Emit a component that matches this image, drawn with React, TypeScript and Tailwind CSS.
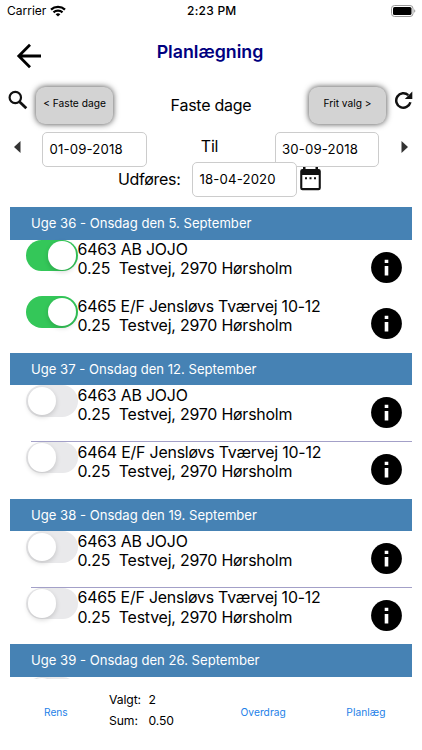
import { useState } from "react";

interface Task {
  id: string;
  name: string;
  hours: string;
  address: string;
}

interface Week {
  title: string;
  tasks: Task[];
}

const ADDRESS = "Testvej, 2970 Hørsholm";

const weeks: Week[] = [
  {
    title: "Uge 36 - Onsdag den 5. September",
    tasks: [
      { id: "36-1", name: "6463 AB JOJO", hours: "0.25", address: ADDRESS },
      { id: "36-2", name: "6465 E/F Jensløvs Tværvej 10-12", hours: "0.25", address: ADDRESS },
    ],
  },
  {
    title: "Uge 37 - Onsdag den 12. September",
    tasks: [
      { id: "37-1", name: "6463 AB JOJO", hours: "0.25", address: ADDRESS },
      { id: "37-2", name: "6464 E/F Jensløvs Tværvej 10-12", hours: "0.25", address: ADDRESS },
    ],
  },
  {
    title: "Uge 38 - Onsdag den 19. September",
    tasks: [
      { id: "38-1", name: "6463 AB JOJO", hours: "0.25", address: ADDRESS },
      { id: "38-2", name: "6465 E/F Jensløvs Tværvej 10-12", hours: "0.25", address: ADDRESS },
    ],
  },
];

function StatusBar() {
  return (
    <div className="flex h-[22px] items-center pl-[7px] pr-[6px] text-[12px] leading-none">
      <div className="flex w-[180px] items-center gap-[4px]">
        <span>Carrier</span>
        <svg className="h-[12px] w-[16px]" viewBox="0 0 16 12">
          <path d="M1 4.6a10.2 10.2 0 0 1 14 0" fill="none" stroke="#000" strokeWidth="2.3" />
          <path d="M3.5 7.4a6.6 6.6 0 0 1 9 0" fill="none" stroke="#000" strokeWidth="2.2" />
          <path d="M5.6 9.2a3.7 3.7 0 0 1 4.8 0L8 11.6z" />
        </svg>
      </div>
      <span className="font-medium tracking-[0.25px]">2:23 PM</span>
      <svg className="ml-auto h-[12px] w-[25px]" viewBox="0 0 25 12">
        <rect x="0.5" y="0.5" width="21.5" height="11" rx="3" fill="#fff" stroke="#999" />
        <rect x="2" y="2" width="18.5" height="8" rx="1.6" />
        <path d="M23.2 4.2c1.5.6 1.5 3 0 3.6z" fill="#999" />
      </svg>
    </div>
  );
}

function DateField({ value }: { value: string }) {
  return (
    <div className="flex h-[34.5px] w-[104.5px] items-center rounded-[5px] border border-[#ccc] bg-white pl-[6.5px] pt-[1.5px] text-[13.2px] tracking-[0.15px]">
      {value}
    </div>
  );
}

function Toggle({ on, onClick }: { on: boolean; onClick?: () => void }) {
  return (
    <button
      role="switch"
      aria-checked={on}
      onClick={onClick}
      className={`flex h-[31.5px] w-[51.5px] shrink-0 items-center rounded-full px-[1.5px] ${
        on ? "justify-end bg-[#34c759]" : "justify-start bg-[#e9e9eb]"
      }`}
    >
      <span className="size-[28.5px] rounded-full bg-white shadow-[0_2px_5px_rgba(0,0,0,0.16)]" />
    </button>
  );
}

function InfoIcon() {
  return (
    <svg className="size-[31px]" viewBox="0 0 31 31">
      <circle cx="15.5" cy="15.5" r="15.4" />
      <path d="M13.7 7.8h3.6v3.2h-3.6zM13.7 14h3.6v9.5h-3.6z" fill="#fff" />
    </svg>
  );
}

export default function App() {
  const [selected, setSelected] = useState<string[]>(["36-1", "36-2"]);

  const toggle = (id: string) => {
    setSelected((prev) => (prev.includes(id) ? prev.filter((x) => x !== id) : [...prev, id]));
  };

  return (
    <div className="flex h-[750px] w-[422px] flex-col overflow-hidden bg-white font-['Inter',sans-serif] text-black">
      <StatusBar />

      {/* Title */}
      <header className="flex h-[60px] items-center pl-[16px] pr-[46px]">
        <svg className="mt-[8px] h-[26px] w-[26px]" viewBox="0 0 26 26" fill="none" stroke="#000" strokeWidth="2.8">
          <path d="M25 13H3M14 1.8L2.8 13 14 24.2" />
        </svg>
        <h1 className="flex-1 pl-[2px] text-center text-[17.8px] font-semibold text-[#000080]">Planlægning</h1>
      </header>

      {/* Mode */}
      <div className="flex h-[48px] items-start pl-[8px] pr-[9px] pt-[4px]">
        <svg className="mt-[4px] size-[20px]" viewBox="0 0 20 20" fill="none" stroke="#111">
          <circle cx="7.3" cy="7.5" r="5.7" strokeWidth="2.2" />
          <path d="M11.5 11.7l6.8 6.6" strokeWidth="2.8" />
        </svg>
        <button className="ml-[8px] mt-[1px] h-[37px] w-[77px] rounded-[9px] bg-[#d3d3d3] pb-[4px] text-[10.2px] shadow-[0_0_6px_rgba(0,0,0,0.75)]">
          &lt; Faste dage
        </button>
        <div className="flex-1 pt-[7px] text-center text-[16px] tracking-[-0.25px]">Faste dage</div>
        <button className="mt-[1px] h-[37px] w-[77px] rounded-[9px] bg-[#d3d3d3] pb-[4px] text-[10.2px] shadow-[0_0_6px_rgba(0,0,0,0.75)]">
          Frit valg &gt;
        </button>
        <svg className="ml-[8px] mt-[4px] size-[19px]" viewBox="0 0 19 19">
          <path d="M14.3 5.2A7.2 7.2 0 1 0 16.4 12.3" fill="none" stroke="#111" strokeWidth="2.5" />
          <path d="M18.3 1.5v7.5h-7.5z" fill="#111" />
        </svg>
      </div>

      {/* Period */}
      <div className="flex h-[32px] items-start pl-[14px] pr-[14px] pt-[2px]">
        <svg className="mt-[9px] h-[12px] w-[7px]" viewBox="0 0 7 12">
          <path d="M6.5 0v12L0 6z" fill="#333" />
        </svg>
        <div className="ml-[21px]">
          <DateField value="01-09-2018" />
        </div>
        <div className="flex-1 pr-[2px] pt-[4px] text-center text-[16px] leading-[20px] tracking-[-0.2px]">Til</div>
        <DateField value="30-09-2018" />
        <svg className="ml-[22px] mt-[9px] h-[12px] w-[7px]" viewBox="0 0 7 12">
          <path d="M0.5 0v12L7 6z" fill="#333" />
        </svg>
      </div>
      <div className="flex h-[45px] items-start pl-[118px]">
        <span className="w-[74px] pt-[7px] text-[16px] leading-[20px] tracking-[-0.3px]">Udføres:</span>
        <div className="relative">
          <DateField value="18-04-2020" />
        </div>
        <svg className="ml-[3px] mt-[5px] h-[23.5px] w-[21px]" viewBox="0 0 21 23.5">
          <path
            d="M3 0h2.5v2h10V0H18v2h.5A2.300 2.300 0 0 1 20.800 4.300v16.700a2.300 2.300 0 0 1-2.300 2.300h-16A2.300 2.300 0 0 1 .2 21V4.300A2.300 2.300 0 0 1 2.500 2H3z"
            fill="#111"
          />
          <path d="M2.300 8h16.400v13H2.300z" fill="#fff" />
          <path d="M5 10.200h2v2H5zM9.500 10.200h2v2h-2zM14 10.200h2v2h-2z" fill="#111" />
        </svg>
      </div>

      {/* Weeks */}
      <main className="h-[472px] shrink-0 overflow-hidden pl-[10px] pr-[10.5px]">
        {weeks.map((week) => (
          <section key={week.title} className="h-[145.8px]">
            <h2 className="h-[32.5px] bg-[#4682b4] pl-[21px] text-[13.1px] leading-[32px] text-white">
              {week.title}
            </h2>
            {week.tasks.map((task, i) => {
              const on = selected.includes(task.id);
              return (
                <div key={task.id} className="relative flex h-[56.7px] pl-[16px]">
                  {i > 0 && !on && <div className="absolute left-[21px] right-0 -top-[0.5px] h-px bg-[#a3a0c8]" />}
                  <Toggle on={on} onClick={() => toggle(task.id)} />
                  <div className="flex-1 whitespace-pre pt-[0.6px] text-[15.9px] leading-[19.3px] tracking-[-0.2px]">
                    <p>{task.name}</p>
                    <p>{task.hours + "  " + task.address}</p>
                  </div>
                  <button className="mr-[10px] mt-[12px] size-[31px]">
                    <InfoIcon />
                  </button>
                </div>
              );
            })}
          </section>
        ))}
        {/* next week, just scrolling into view */}
        <section>
          <h2 className="h-[32.5px] bg-[#4682b4] pl-[21px] text-[13.1px] leading-[32px] text-white">
            Uge 39 - Onsdag den 26. September
          </h2>
          <div className="pl-[16px]">
            <Toggle on={false} />
          </div>
        </section>
      </main>

      {/* Footer */}
      <footer className="flex flex-1 items-start pl-[44px] pr-[36.5px] text-[10.2px] text-[#1e7fe8]">
        <button className="mt-[26px] w-[65px] text-left">Rens</button>
        <div className="grid grid-cols-[39.5px_1fr] pt-[11px] text-[12.2px] leading-[20.5px] tracking-[-0.1px] text-black">
          <span>Valgt:</span>
          <span>{selected.length}</span>
          <span>Sum:</span>
          <span>{(selected.length * 0.25).toFixed(2)}</span>
        </div>
        <button className="ml-auto mt-[26px] tracking-[0.05px]">Overdrag</button>
        <button className="ml-[60.5px] mt-[26px] tracking-[0.05px]">Planlæg</button>
      </footer>
    </div>
  );
}
